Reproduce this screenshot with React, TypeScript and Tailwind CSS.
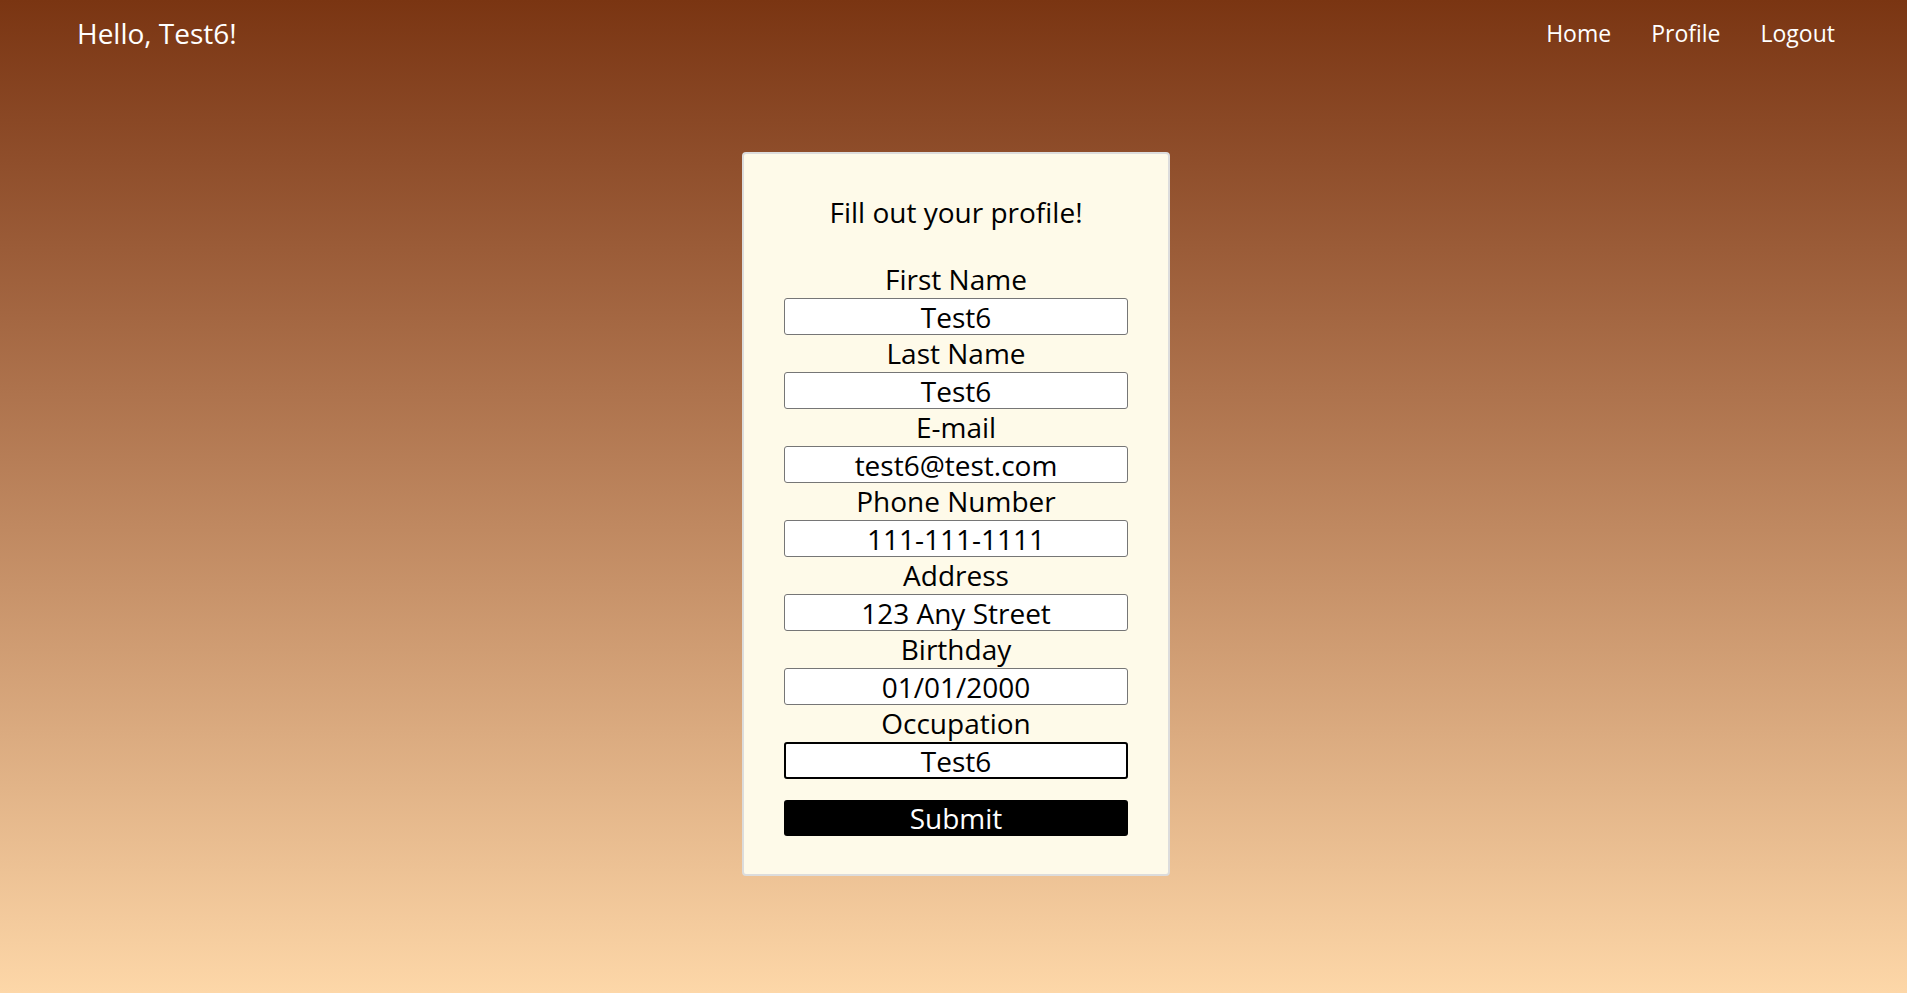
const fields = [
  { label: "First Name", value: "Test6" },
  { label: "Last Name", value: "Test6" },
  { label: "E-mail", value: "test6@test.com" },
  { label: "Phone Number", value: "111-111-1111" },
  { label: "Address", value: "123 Any Street" },
  { label: "Birthday", value: "01/01/2000" },
  { label: "Occupation", value: "Test6" },
];

export default function App() {
  return (
    <div className="min-h-[993px] w-full bg-gradient-to-b from-[#7a3512] to-[#fdd7a8] font-['Open_Sans',sans-serif]">
      <header className="flex items-center justify-between h-[66px] pl-[77px] pr-[72px]">
        <span className="text-[28px] text-white">Hello, Test6!</span>
        <nav className="flex gap-[40px] text-[23px] text-white">
          <a>Home</a>
          <a>Profile</a>
          <a>Logout</a>
        </nav>
      </header>
      <div className="flex justify-center pt-[86px]">
        <form className="w-[428px] ml-[5px] bg-[#fefae9] border-2 border-[#dcdcdc] rounded-[4px] px-[40px] pt-[40px] pb-[38px] flex flex-col text-black">
          <h2 className="text-[28px] leading-[37px] text-center mb-[30px]">Fill out your profile!</h2>
          {fields.map((f, i) => (
            <div key={f.label} className="flex flex-col items-stretch">
              <label className="text-[28px] leading-[37px] text-center">{f.label}</label>
              <input
                readOnly
                value={f.value}
                className={
                  i === fields.length - 1
                    ? "h-[37px] bg-white text-center text-[28px] rounded-[3px] border-2 border-black outline-none"
                    : "h-[37px] bg-white text-center text-[28px] rounded-[3px] border border-[#767676] outline-none"
                }
              />
            </div>
          ))}
          <button type="button" className="mt-[21px] h-[36px] bg-black text-white text-[28px] leading-[36px] rounded-[3px]">
            Submit
          </button>
        </form>
      </div>
    </div>
  );
}
